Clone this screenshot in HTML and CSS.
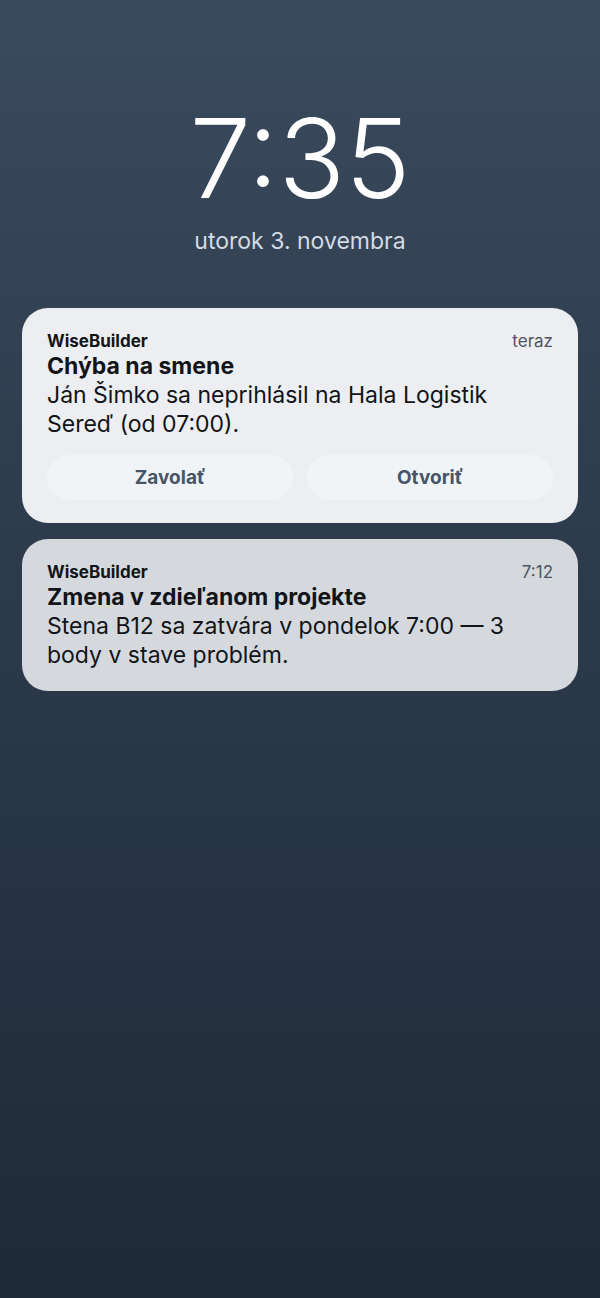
FILE: index.html
```html
<!DOCTYPE html>
<html lang="sk">
<head>
  <meta charset="UTF-8">
  <meta name="viewport" content="width=device-width, initial-scale=1.0">
  <title>Zamknutá obrazovka</title>
  <link rel="stylesheet" href="styles.css">
</head>
<body>

  <!-- Clock -->
  <div class="clock">
    <div class="time">7:35</div>
    <div class="date">utorok 3. novembra</div>
  </div>

  <!-- Notifications -->
  <div class="notifications">
    <div class="notif notif-active">
      <div class="notif-head">
        <span class="app">WiseBuilder</span>
        <span class="when">teraz</span>
      </div>
      <div class="notif-title">Chýba na smene</div>
      <div class="notif-body">Ján Šimko sa neprihlásil na Hala Logistik Sereď (od 07:00).</div>
      <div class="actions">
        <button class="action">Zavolať</button>
        <button class="action">Otvoriť</button>
      </div>
    </div>

    <div class="notif notif-old">
      <div class="notif-head">
        <span class="app">WiseBuilder</span>
        <span class="when">7:12</span>
      </div>
      <div class="notif-title">Zmena v zdieľanom projekte</div>
      <div class="notif-body">Stena B12 sa zatvára v pondelok 7:00 — 3 body v stave problém.</div>
    </div>
  </div>

</body>
</html>
```

FILE: styles.css
```css
html, body {
  height: 100%;
}
body {
  margin: 0;
  font-family: Inter, "Noto Sans", sans-serif;
  background: linear-gradient(180deg, #3a4b5d 0%, #2c3a4b 45%, #1f2a37 100%);
  color: #fff;
}
.clock {
  padding-top: 98px;
  text-align: center;
}
.time {
  font-size: 110px;
  font-weight: 300;
  line-height: 120px;
}
.date {
  margin-top: 9px;
  font-size: 23px;
  line-height: 28px;
  color: #d3dbe4;
}
.notifications {
  margin-top: 53px;
  padding: 0 22px;
  display: flex;
  flex-direction: column;
  gap: 16px;
}
.notif {
  border-radius: 26px;
  padding: 22px 25px 23px;
  color: #111418;
}
.notif-active {
  background: #eceef1;
}
.notif-old {
  background: #d5d9de;
  padding-bottom: 21px;
}
.notif-head {
  display: flex;
  justify-content: space-between;
  align-items: baseline;
  line-height: 22px;
}
.app {
  font-size: 17px;
  font-weight: 700;
}
.when {
  font-size: 17px;
  color: #4b5563;
}
.notif-title {
  font-size: 23px;
  font-weight: 700;
  line-height: 29px;
}
.notif-body {
  font-size: 23px;
  line-height: 29px;
}
.actions {
  display: grid;
  grid-template-columns: 1fr 1fr;
  gap: 14px;
  margin-top: 16px;
}
.action {
  height: 45px;
  border: 0;
  border-radius: 23px;
  background: #f1f4f7;
  font-family: inherit;
  font-size: 19px;
  font-weight: 700;
  color: #475569;
}
```
